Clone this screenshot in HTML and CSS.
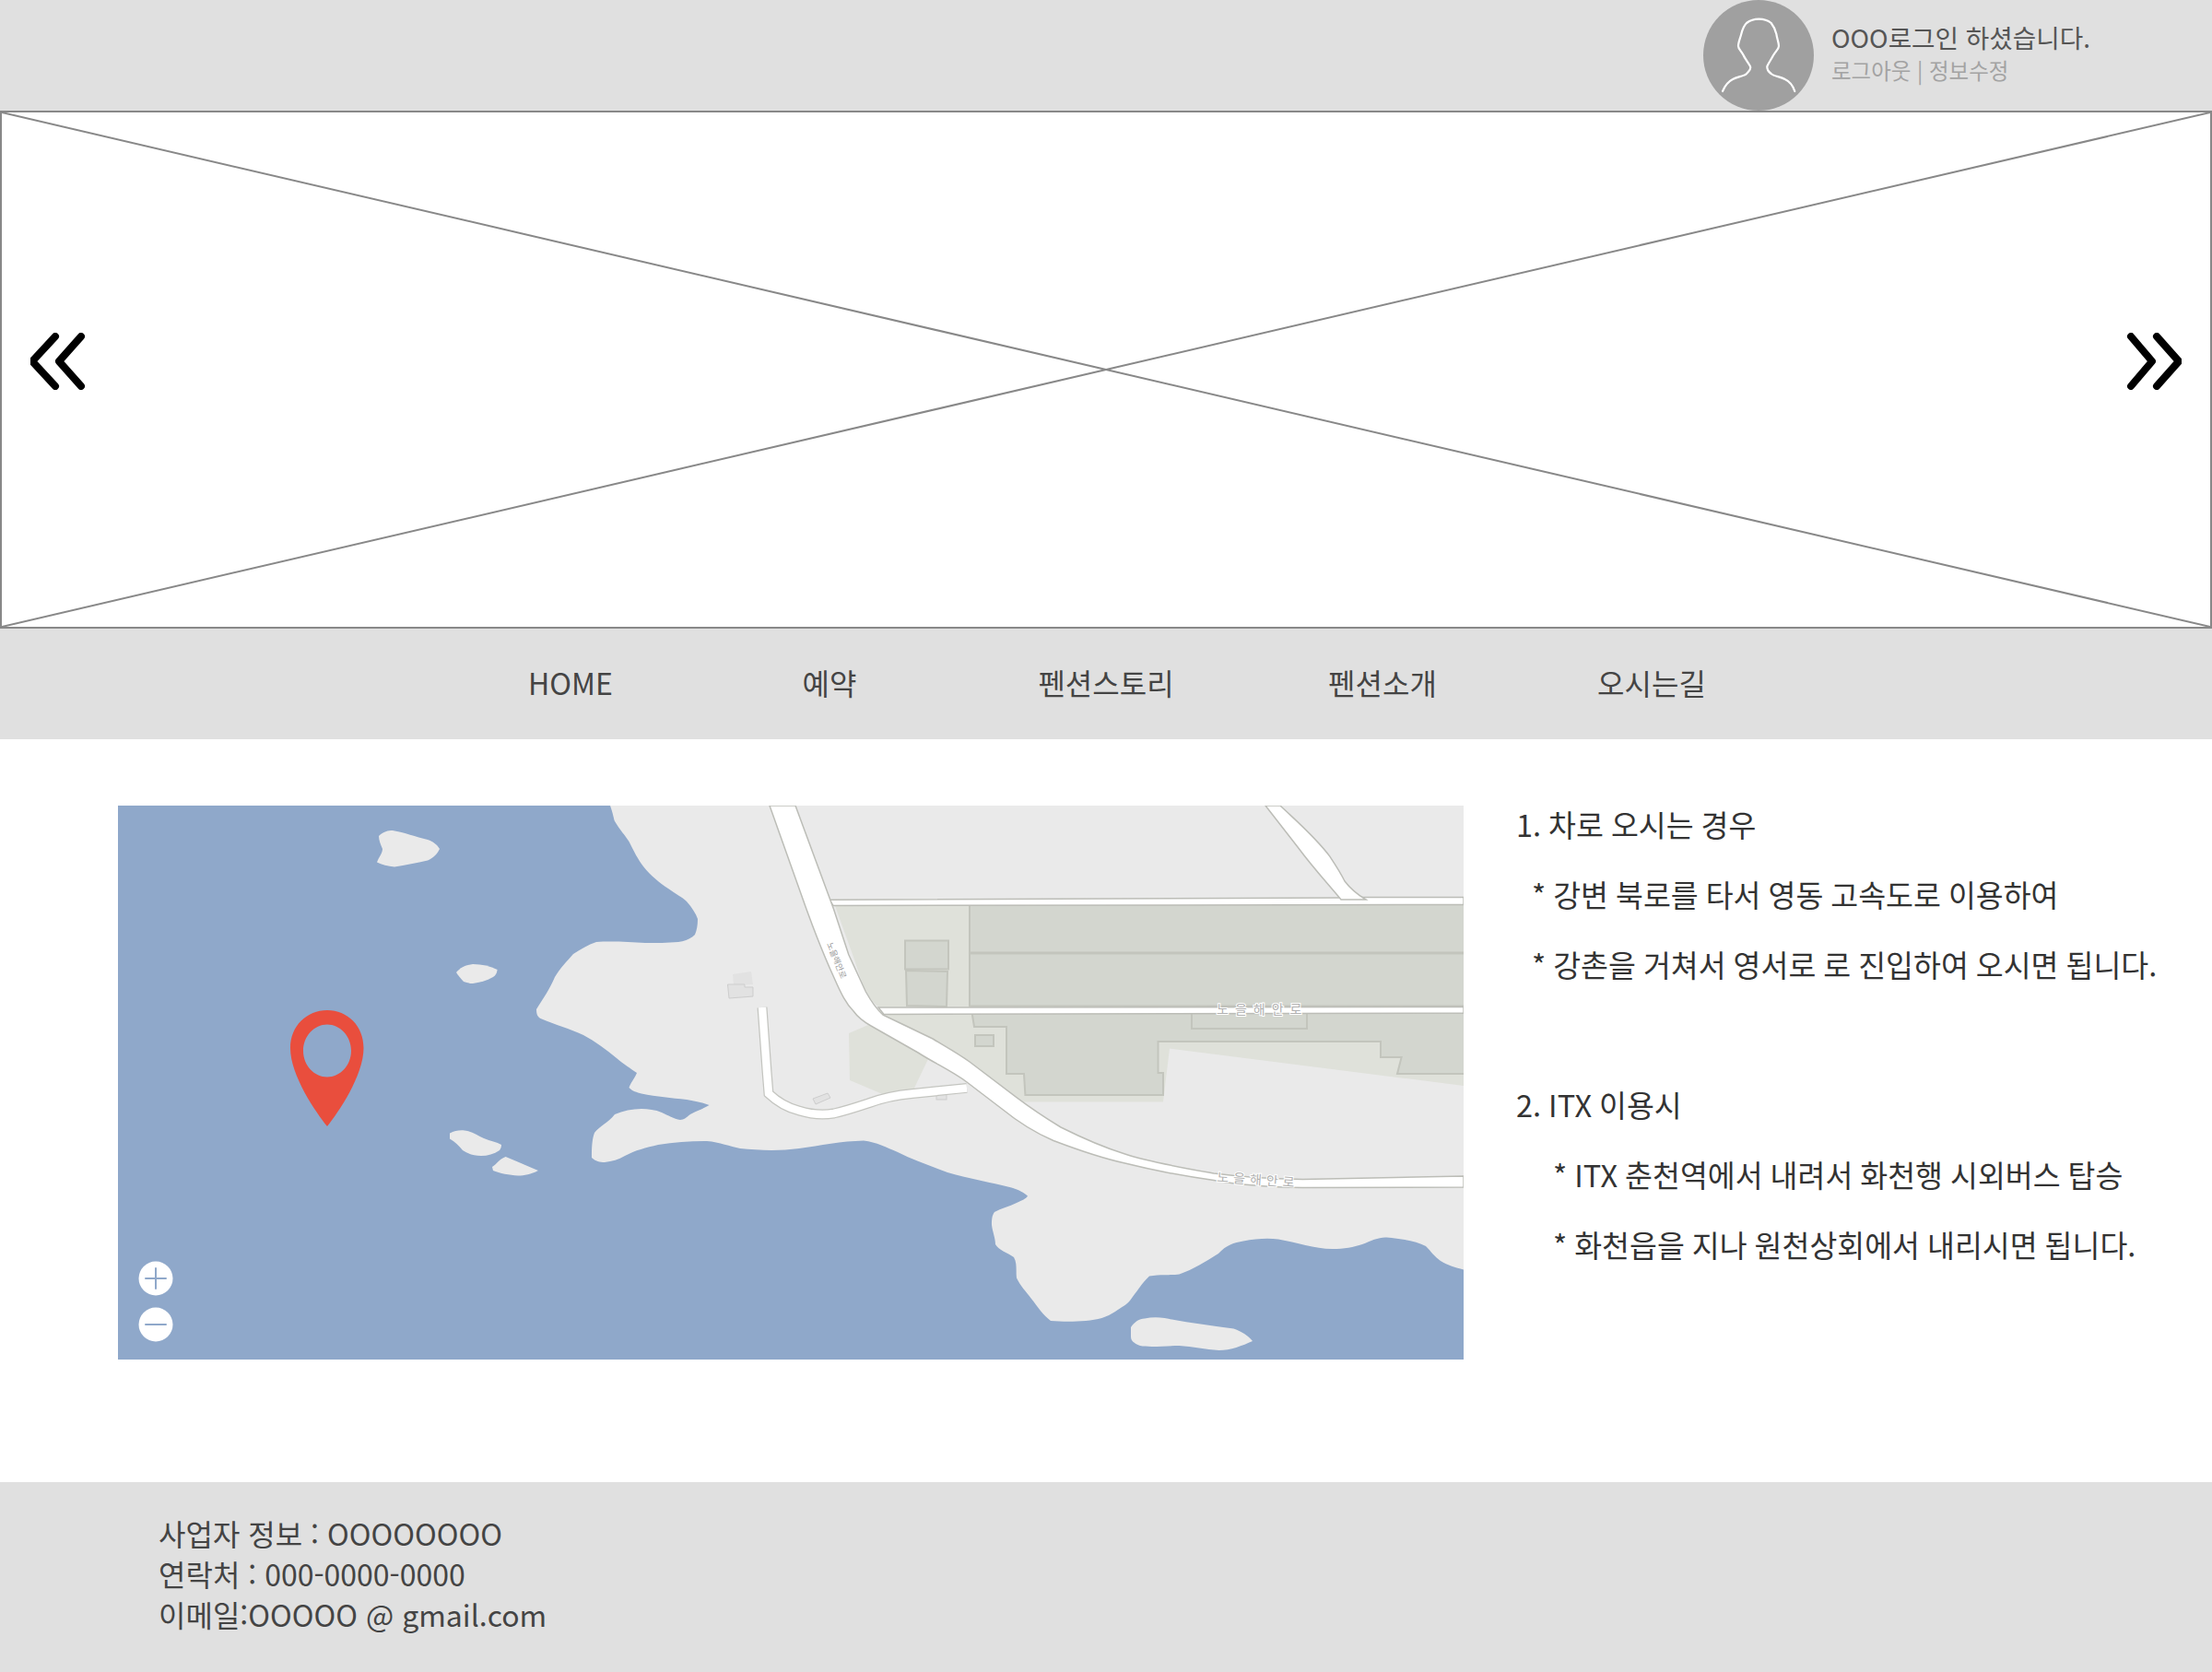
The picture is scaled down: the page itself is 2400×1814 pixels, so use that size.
FILE: index.html
```html
<!DOCTYPE html>
<html lang="ko">
<head>
    <meta charset="UTF-8">
    <meta name="viewport" content="width=device-width, initial-scale=1.0">
    <title>오시는길</title>
    <link rel="stylesheet" href="styles.css">
</head>
<body>

    <div class="top">
        <svg class="avatar" viewBox="0 0 120 120">
            <circle cx="60" cy="60" r="60" fill="#a0a0a0"/>
            <path d="M21 99C24 92 28 88 32 86C37 83 44 83 47 80C50 77 52 74 51 72C48 67 45 63 43.7 60C41 55 38 53 38 50C38 46 40 42 41.3 36.7C43 30 45 27 47 25C51 22 55 20.7 60.3 20.7C66 20.7 70 22 73.7 25C76 28 78 31 79.3 36.7C80 42 82 46 82 50C82 53 79 55 76 60C74 64 71 68 69.3 72C69 75 71 78 73.7 80C77 83 84 83 88.7 86C93 88 97 92 99.3 99" fill="none" stroke="#fff" stroke-width="2.200" stroke-linecap="round"/>
        </svg>
        <div class="user">
            <div class="user-name">OOO로그인 하셨습니다.</div>
            <div class="user-links">로그아웃 | 정보수정</div>
        </div>
    </div>

    <div class="hero">
        <svg class="hero-x" viewBox="0 0 100 100" preserveAspectRatio="none">
            <line x1="0" y1="0" x2="100" y2="100" vector-effect="non-scaling-stroke"/>
            <line x1="100" y1="0" x2="0" y2="100" vector-effect="non-scaling-stroke"/>
        </svg>
        <svg class="arrow" viewBox="0 0 66 62">
            <path d="M27 4L2 31L27 58M55 4L31 31L55 58"/>
        </svg>
        <svg class="arrow" viewBox="0 0 66 62">
            <path d="M39 4L63 31L39 58M11 4L34 31L11 58"/>
        </svg>
    </div>

    <div class="nav">
        <a>HOME</a>
        <a>예약</a>
        <a>펜션스토리</a>
        <a>펜션소개</a>
        <a>오시는길</a>
    </div>

    <div class="main">
        <svg class="map" viewBox="0 0 1460 601">
            <rect width="1460" height="601" fill="#8fa8ca"/>

            <!-- land -->
            <g fill="#eaeaea">
                <path d="M534 0C537 8 538 15 539 17C545 27 550 32 554.500 39C560 50 564 58 570 66C578 76 588 84 597 90C605 96 612 99 617 104C623 111 627 117 629 123C629 130 628 135 626 140C621 145 615 147 608 148C596 149 585 149 572 149C555 148 535 147 519 148C510 151 502 156 494 161C487 169 480 176 474 186C469 198 461 210 454 221C454 226 455 229 458.500 231C475 238 490 242 505 249C518 256 530 265 541 274C549 281 556 285 563 290C560 297 556 301 554.500 306C558 310 563 311 568 312.500C585 316 600 317 617 319C627 321 635 322 641.500 325C635 329 628 331 621 335C617 338 614 341 610 341C603 340 597 336 590 333C583 330 575 329 568 329C558 329 548 331 539 335C532 344 522 348 517 355C514 363 514 373 514 382C518 386 523 387 528 387C536 386 543 384 550 380C561 374 573 371 586 368C604 365 622 364 639 364C653 365 664 370 675 372C695 374 717 375 739 372C762 369 785 364 809 363.500C823 365 834 371 846 376C864 385 882 391 900 398C924 405 948 409 969.500 414.500C978 417 983 420 987 423.500C985 427 981 428 975 431C967 435 958 437 951 441C948 445 948 450 948 455C949 463 952 469 952 476C955 482 965 485 972 490C976 497 974 505 975 512.500C979 521 985 527 991 535C998 544 1004 553 1012 559C1024 560 1038 560 1050 559C1063 558 1073 555 1082 549C1089 544 1094 542 1098 537C1105 528 1111 518 1119 510.500C1130 508 1142 510 1151.500 508.500C1167 503 1180 495 1194 486C1202 477 1211 474 1221 472.500C1234 470 1247 469 1259 470.500C1279 474 1298 481 1317.600 481C1330 481 1341 479 1350 476C1360 472 1368 468 1376.500 468.500C1392 470 1408 472 1419 478C1425 484 1428 489 1435 494C1443 499 1451 501 1460 503.500L1460 0Z"/>
                <path d="M1099 566C1103 560 1108 557 1114 556.600C1121 555 1128 555 1135.500 556C1160 561 1186 564 1210.500 567.600C1220 571 1226 575 1231 581C1220 586 1207 591 1194.500 591C1180 590 1166 587 1151.500 586C1137 586 1120 588 1109 586C1102 583 1099 581 1099 576Z"/>
                <path d="M283 33C288 28 293 27 298 27C311 29 323 34 336 37C342 39 346 42 349 47C346 53 342 57 336 59.500C324 62 312 65 300 66.400C293 66 286 64 281 61.500C283 56 287 52 287 47C285 42 283 38 283 33Z"/>
                <path d="M367 181C372 175 378 173 385 172C395 172 404 174 411.600 178C411 182 410 184 407 186C400 190 392 192 385 193C381 193 378 192 375 191C372 188 369 184 367 181Z"/>
                <path d="M360 355.400C365 353 370 352 376 352.500C384 353 390 358 397 361C404 364 411 365 416 368C416 371 415 372 414 374C408 378 401 380 394 380C386 380 380 378 374 374C370 369 366 365 360 361.500Z"/>
                <path d="M406 392C411 389 413 384 420.600 381C433 386 444 391 456 396C448 400 441 401.500 434 401.500C425 401 414 399 407 396Z"/>
            </g>

            <!-- fields -->
            <g fill="#dfe1da">
                <path d="M778 108.400L1460 108L1460 218L825 218C815 212 806 190 800 170Z"/>
                <path d="M833 227L1460 225L1460 304L1141 263.500L1134 321.500L983 321.500L924 278Z"/>
                <path d="M793 247L814 238L879.500 274L862 310.500L833 314.600L794 298Z"/>
            </g>
            <g fill="#d3d6cf" stroke="#c3c5bd" stroke-width="2">
                <rect x="924" y="106.500" width="538" height="53"/>
                <rect x="924" y="160.500" width="538" height="57"/>
                <rect x="854" y="146.500" width="47" height="31"/>
                <path d="M855 179L900 180L899 218L856 217Z"/>
                <path d="M926.600 225L929 240L964 240L964 291L983 291L984.400 314L1134 314L1134 290L1128.500 290L1128.500 256L1370 256L1370 273L1392.600 273L1388 291L1462 291L1462 225Z"/>
                <rect x="1165" y="225" width="125" height="17"/>
                <rect x="930" y="249" width="20" height="12"/>
            </g>

            <!-- buildings -->
            <g fill="#e2e2e2" stroke="#cdcdcd">
                <path d="M667 183L687 180L689 194L668 195Z" stroke="none"/>
                <path d="M661.500 194L680 194L680 197L689 197L689 207L663 209Z"/>
                <path d="M754 318L770 312L773 317L757 324Z"/>
                <rect x="888" y="313" width="11" height="6"/>
            </g>

            <!-- roads -->
            <g fill="#fff" stroke="#bcbdb7" stroke-width="1.500">
                <path d="M772 102.300L1327 100L1350 99.500L1460 99.500L1460 107.500L776 108.500Z"/>
                <path d="M1245 0L1280 45C1297 68 1313 85 1327 102L1354 102C1344 96 1337 90 1331 82C1326 72 1322 66 1315 55.400C1300 35 1280 18 1261 0Z"/>
                <path d="M825 219L1460 218.500L1460 225L831 226.500Z"/>
                <path d="M707 0L747 112.500C757 140 767 165 776.600 186C785 205 790 215 798 223C803 230 810 235 817 239L868 268C885 279 905 288 921 300L959 329C975 342 995 355 1015 363.500C1040 373 1065 382 1092.600 388C1125 396 1155 402 1189 406.400C1220 412 1255 414 1285.500 414.600L1460 414L1460 402L1285.500 405.600C1255 405 1220 403 1189 399C1155 393 1120 387 1092.600 378C1070 371 1045 360 1023 349C1005 338 990 328 975 316.600L924 278C910 268 897 261 884 253L830 227C822 220 817 212 811.400 202L792.700 161.500L776.600 112.500L735 0Z"/>
            </g>
            <path d="M699 219L704 288L706 312.500C716 322 727 328 739 331C752 335 765 336 776.600 334C790 331 802 327 814 323C830 317 845 314 862 312.500L921 306.400" fill="none" stroke="#c4c5c0" stroke-width="11"/>
            <path d="M699 219L704 288L706 312.500C716 322 727 328 739 331C752 335 765 336 776.600 334C790 331 802 327 814 323C830 317 845 314 862 312.500L921 306.400" fill="none" stroke="#fff" stroke-width="8.500"/>

            <!-- road names -->
            <g class="road-name">
                <text class="road-flat" x="1192" y="226">노을해안로</text>
                <text class="road-low" x="1192" y="408" transform="rotate(4 1192 408)">노을해안로</text>
                <text class="road-side" x="769" y="150" transform="rotate(68 769 150)">노을해안로</text>
            </g>

            <!-- pin -->
            <path d="M227 348C215 333 187 293 187 263C187 239 205 222 227 222C249 222 266.500 239 266.500 263C266.500 293 239 333 227 348ZM227 237.500C213 237.500 201 250 201 266C201 282 213 294.500 227 294.500C241 294.500 253 282 253 266C253 250 241 237.500 227 237.500Z" fill="#e94e3d" fill-rule="evenodd"/>

            <!-- zoom -->
            <circle cx="41" cy="513" r="18.500" fill="#fff"/>
            <circle cx="41" cy="563" r="18.500" fill="#fff"/>
            <path d="M30 513H52M41 502V524M30 563H52" stroke="#8fa8ca" stroke-width="2" stroke-linecap="round"/>
        </svg>

        <div class="guide">
            <div>1. 차로 오시는 경우</div>
            <div class="in1">* 강변 북로를 타서 영동 고속도로 이용하여</div>
            <div class="in1">* 강촌을 거쳐서 영서로 로 진입하여 오시면 됩니다.</div>
            <div class="gap"></div>
            <div>2. ITX 이용시</div>
            <div class="in2">* ITX 춘천역에서 내려서 화천행 시외버스 탑승</div>
            <div class="in2">* 화천읍을 지나 원천상회에서 내리시면 됩니다.</div>
        </div>
    </div>

    <div class="footer">
        <div>사업자 정보 : OOOOOOOO</div>
        <div>연락처 : 000-0000-0000</div>
        <div>이메일:OOOOO @ gmail.com</div>
    </div>

</body>
</html>
```

FILE: styles.css
```css
* {
    box-sizing: border-box;
}

body {
    margin: 0;
    width: 2400px;
    height: 1814px;
    overflow: hidden;
    background-color: #fff;
    color: #444;
    font-family: "Noto Sans CJK KR", "Noto Sans", sans-serif;
}

.top {
    height: 120px;
    padding-left: 1848px;
    display: flex;
    background-color: #e0e0e0;
}

.avatar {
    width: 120px;
    height: 120px;
}

.user {
    margin-left: 19px;
    padding-top: 19px;
}

.user-name {
    font-size: 27.700px;
    line-height: 42px;
    color: #555;
}

.user-links {
    font-size: 23.500px;
    line-height: 30px;
    color: #a3a3a3;
}

.hero {
    position: relative;
    height: 562px;
    padding: 0 31px 18px;
    display: flex;
    justify-content: space-between;
    align-items: center;
    border: 2px solid #888;
    background-color: #fff;
}

.hero-x {
    position: absolute;
    left: 0;
    top: 0;
    width: 100%;
    height: 100%;
}

.hero-x line {
    stroke: #888;
    stroke-width: 2;
}

.arrow {
    position: relative;
    width: 66px;
    height: 62px;
}

.arrow path {
    fill: none;
    stroke: #000;
    stroke-width: 8;
    stroke-linecap: round;
    stroke-linejoin: round;
}

.nav {
    height: 120px;
    padding: 0 0 4px 469px;
    display: grid;
    grid-template-columns: 300px 262px 338px 262px 322px;
    align-items: center;
    background-color: #e0e0e0;
    font-size: 32px;
    text-align: center;
}

.main {
    height: 806px;
    padding: 54px 0 0 128px;
    display: flex;
    align-items: flex-start;
}

.map {
    width: 1460px;
    height: 601px;
    margin-top: 18px;
    flex-shrink: 0;
}

.road-name text {
    font-size: 14px;
    fill: #b0b0b0;
    stroke: #fff;
    stroke-width: 2px;
    paint-order: stroke;
}

.road-name .road-flat {
    letter-spacing: 7px;
}

.road-name .road-low {
    letter-spacing: 5px;
}

.road-name .road-side {
    font-size: 9px;
    fill: #999;
}

.guide {
    margin-left: 57px;
    font-size: 32.500px;
    word-spacing: -1.100px;
    line-height: 76px;
    white-space: nowrap;
    color: #333;
}

.gap {
    height: 76px;
}

.in1 {
    padding-left: 17px;
}

.in2 {
    padding-left: 40px;
}

.footer {
    height: 206px;
    padding: 33px 0 0 172px;
    background-color: #e0e0e0;
    font-size: 32px;
    line-height: 44px;
}
```
